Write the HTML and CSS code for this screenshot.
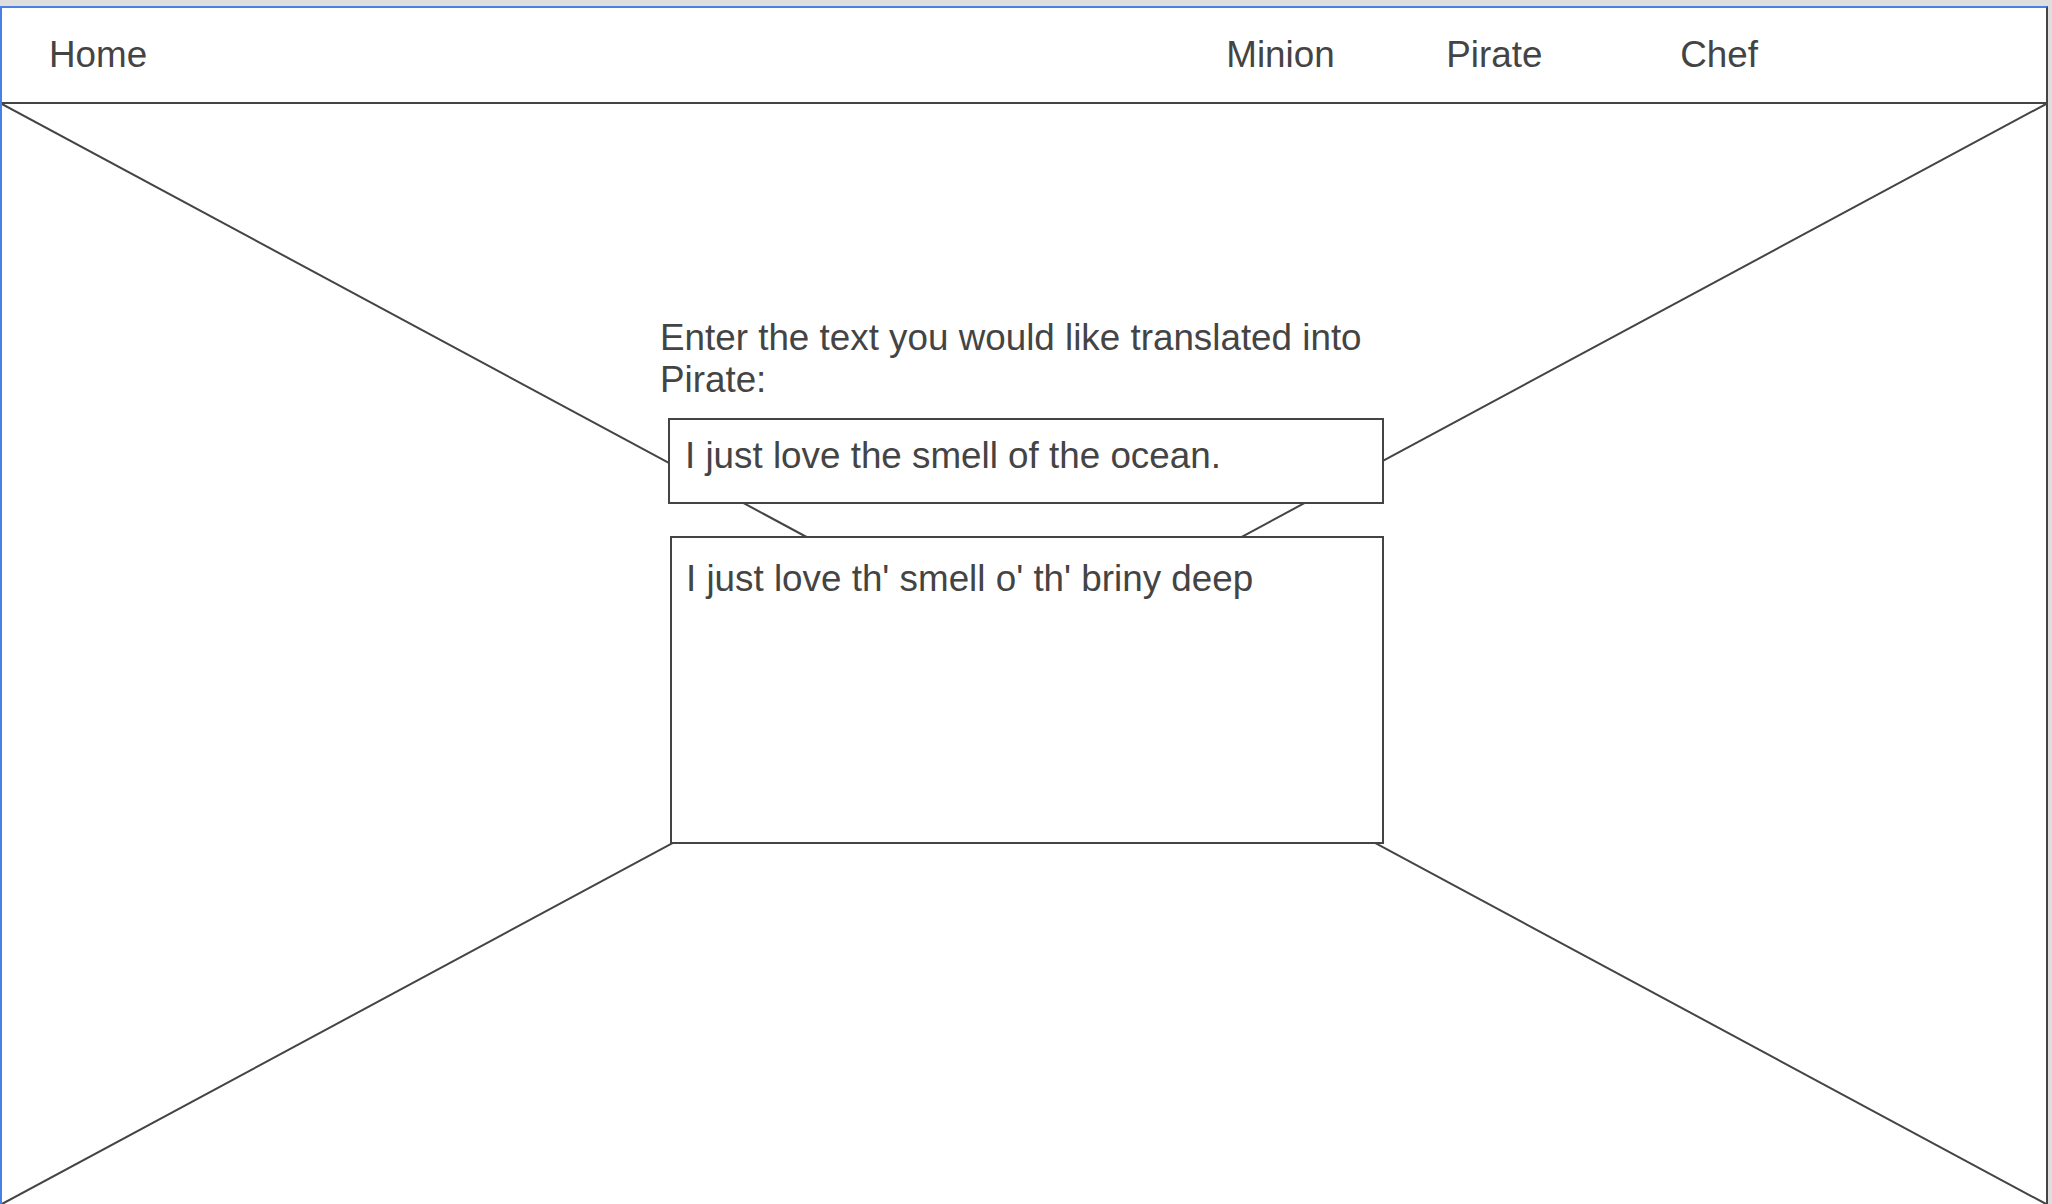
FILE: index.html
```html
<!DOCTYPE html>
<html lang="en">
<head>
<meta charset="utf-8">
<title>Pirate Translator</title>
<link rel="stylesheet" href="styles.css">
</head>
<body>
<div class="frame">
  <header class="header">
    <a class="nav-link home">Home</a>
    <nav class="nav">
      <a class="nav-link">Minion</a>
      <a class="nav-link">Pirate</a>
      <a class="nav-link">Chef</a>
    </nav>
  </header>
  <main class="canvas">
    <svg class="placeholder" viewBox="0 0 2044 1100" preserveAspectRatio="none" aria-hidden="true">
      <line x1="0" y1="0" x2="2044" y2="1100"/>
      <line x1="2044" y1="0" x2="0" y2="1100"/>
    </svg>
    <section class="form">
      <p class="label">Enter the text you would like translated into Pirate:</p>
      <div class="input-box">I just love the smell of the ocean.</div>
      <div class="output-box">I just love th' smell o' th' briny deep</div>
    </section>
  </main>
</div>
</body>
</html>
```

FILE: styles.css
```css
html, body {
  margin: 0;
  padding: 0;
}

body {
  width: 2052px;
  height: 1204px;
  overflow: hidden;
  background: #dedede;
  font-family: "Liberation Sans", Arial, sans-serif;
  color: #444;
}

.frame {
  box-sizing: border-box;
  margin-top: 6px;
  width: 2048px;
  height: 1198px;
  background: #fff;
  border-top: 2px solid #4a7fe4;
  border-left: 2px solid #4a7fe4;
  border-right: 2px solid #444;
  display: flex;
  flex-direction: column;
}

.header {
  box-sizing: border-box;
  height: 96px;
  flex: none;
  border-bottom: 2px solid #444;
  display: flex;
  align-items: center;
  padding: 0 0 2px 47px;
}

.nav-link {
  font-size: 36.8px;
  line-height: 37px;
  color: #444;
  text-decoration: none;
}

.nav {
  margin-left: auto;
  margin-right: 288px;
  display: grid;
  grid-template-columns: 220px 234px auto;
}

.canvas {
  position: relative;
  flex: 1;
  overflow: hidden;
}

.placeholder {
  position: absolute;
  left: 0;
  top: 0;
  width: 100%;
  height: 100%;
}

.placeholder line {
  stroke: #444;
  stroke-width: 2;
  vector-effect: non-scaling-stroke;
}

.form {
  position: relative;
  margin: 213px 0 0 658px;
  width: 730px;
  display: flex;
  flex-direction: column;
}

.label {
  margin: 0;
  font-size: 36.8px;
  line-height: 42px;
}

.input-box {
  box-sizing: border-box;
  margin: 17px 0 0 8px;
  width: 716px;
  height: 86px;
  padding: 15px 15px 0;
  border: 2px solid #444;
  background: #fff;
  font-size: 36.8px;
  line-height: 42px;
}

.output-box {
  box-sizing: border-box;
  margin: 32px 0 0 10px;
  width: 714px;
  height: 308px;
  padding: 20px 14px 0;
  border: 2px solid #444;
  background: #fff;
  font-size: 36.8px;
  line-height: 42px;
}
```
